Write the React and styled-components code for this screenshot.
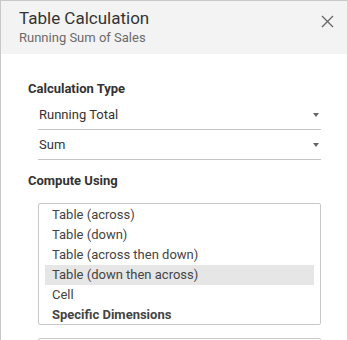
import React from 'react';
import styled, { createGlobalStyle } from 'styled-components';

const GlobalStyle = createGlobalStyle`
  html, body {
    margin: 0;
    padding: 0;
    background: #fff;
  }
  body {
    font-family: Roboto, "Liberation Sans", sans-serif;
    color: #333;
  }
`;

const Panel = styled.div`
  width: 347px;
  height: 340px;
  box-sizing: border-box;
  border-top: 1px solid #c8c8c8;
  border-left: 1px solid #c8c8c8;
  overflow: hidden;
`;

const Header = styled.div`
  display: flex;
  justify-content: space-between;
  align-items: flex-start;
  height: 53px;
  padding: 7px 13px 0 18px;
  box-sizing: border-box;
  background: #f3f3f3;
`;

const Titles = styled.div`
  display: flex;
  flex-direction: column;
`;

const Title = styled.div`
  font-size: 17px;
  line-height: 21px;
  color: #333;
`;

const Subtitle = styled.div`
  font-size: 13px;
  line-height: 18px;
  color: #6b6b6b;
`;

const Close = styled.button`
  border: 0;
  background: none;
  padding: 0;
  margin-top: 7px;
  width: 13px;
  height: 13px;
  display: flex;
  cursor: pointer;
`;

const Body = styled.div`
  padding: 26px 26px 0 27px;
  display: flex;
  flex-direction: column;
`;

const SectionLabel = styled.div`
  font-size: 13px;
  font-weight: 700;
  line-height: 17px;
  color: #333;
  margin-top: ${p => p.$top || 0}px;
  margin-bottom: ${p => p.$gap || 0}px;
`;

const Select = styled.div`
  margin-left: 10px;
  height: 30px;
  box-sizing: border-box;
  border-bottom: 1px solid #c4c4c4;
  display: flex;
  align-items: center;
  justify-content: space-between;
  padding: 0 0 0 1px;
  font-size: 13px;
  color: #333;
`;

const Caret = styled.span`
  width: 0;
  height: 0;
  border-left: 3px solid transparent;
  border-right: 3px solid transparent;
  border-top: 4px solid #666;
  margin-right: 2px;
`;

const ListBox = styled.div`
  margin-left: 10px;
  height: 122px;
  box-sizing: border-box;
  border: 1px solid #c8c8c8;
  border-radius: 2px;
  padding: 1px 6px;
  display: flex;
  flex-direction: column;
`;

const Item = styled.div`
  height: 20px;
  line-height: 20px;
  padding-left: 7px;
  font-size: 13px;
  color: #444;
  font-weight: ${p => (p.$bold ? 700 : 400)};
  background: ${p => (p.$selected ? '#e6e6e6' : 'transparent')};
`;

const NextBox = styled.div`
  margin-left: 10px;
  margin-top: 13px;
  height: 20px;
  border: 1px solid #c8c8c8;
  border-radius: 2px;
`;

const items = [
  'Table (across)',
  'Table (down)',
  'Table (across then down)',
  'Table (down then across)',
  'Cell',
];

export default function App() {
  return (
    <>
      <GlobalStyle />
      <Panel>
        <Header>
          <Titles>
            <Title>Table Calculation</Title>
            <Subtitle>Running Sum of Sales</Subtitle>
          </Titles>
          <Close aria-label="Close">
            <svg width="13" height="13" viewBox="0 0 13 13">
              <path d="M1 1L12 12M12 1L1 12" stroke="#666" strokeWidth="1.3" />
            </svg>
          </Close>
        </Header>
        <Body>
          <SectionLabel $gap={3}>Calculation Type</SectionLabel>
          <Select>
            Running Total
            <Caret />
          </Select>
          <Select>
            Sum
            <Caret />
          </Select>
          <SectionLabel $top={12} $gap={14}>Compute Using</SectionLabel>
          <ListBox>
            {items.map((it, i) => (
              <Item key={it} $selected={i === 3}>{it}</Item>
            ))}
            <Item $bold>Specific Dimensions</Item>
          </ListBox>
          <NextBox />
        </Body>
      </Panel>
    </>
  );
}
